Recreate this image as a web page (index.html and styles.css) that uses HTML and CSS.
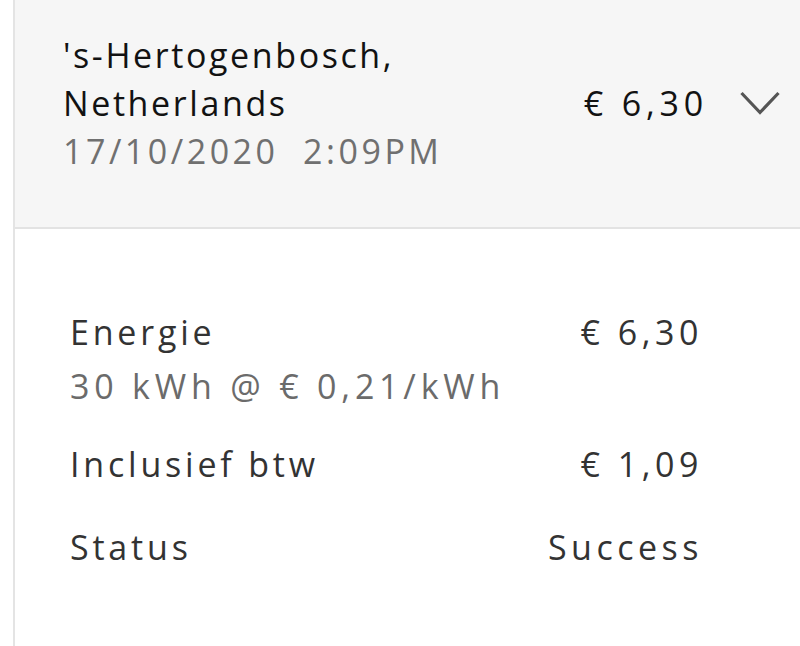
FILE: index.html
```html
<!DOCTYPE html>
<html lang="nl">
<head>
<meta charset="utf-8">
<title>Transactie</title>
<link rel="stylesheet" href="styles.css">
</head>
<body>
<div class="card">
  <div class="header">
    <div class="place">
      <div class="city">'s-Hertogenbosch,</div>
      <div class="city">Netherlands</div>
      <div class="date">17/10/2020&nbsp; 2:09PM</div>
    </div>
    <div class="summary">
      <span class="total">€ 6,30</span>
      <svg class="chevron" width="40" height="24" viewBox="0 0 40 24">
        <polyline points="1.5,2 20,21.5 38.5,2" fill="none" stroke="#555" stroke-width="3.2"/>
      </svg>
    </div>
  </div>
  <div class="details">
    <div class="row row-energy">
      <div class="label-group">
        <div class="label">Energie</div>
        <div class="sub">30 kWh @ € 0,21/kWh</div>
      </div>
      <div class="value">€ 6,30</div>
    </div>
    <div class="row row-vat">
      <div class="label">Inclusief btw</div>
      <div class="value">€ 1,09</div>
    </div>
    <div class="row row-status">
      <div class="label">Status</div>
      <div class="value">Success</div>
    </div>
  </div>
</div>
</body>
</html>
```

FILE: styles.css
```css
html, body {
  margin: 0;
  padding: 0;
  background: #ffffff;
}

body {
  font-family: "Open Sans", "Liberation Sans", sans-serif;
  font-size: 34px;
  line-height: 48px;
  letter-spacing: 2px;
  height: 646px;
  overflow: hidden;
}

.card {
  margin-left: 13px;
  border-left: 2px solid #e4e4e4;
  min-height: 646px;
}

.header {
  display: flex;
  justify-content: space-between;
  align-items: flex-start;
  background: #f6f6f6;
  border-bottom: 2px solid #e3e3e3;
  padding: 31px 20px 52px 48px;
}

.city {
  color: #121212;
  letter-spacing: 2.6px;
}

.date {
  color: #707070;
  letter-spacing: 3.5px;
}

.summary {
  display: flex;
  align-items: center;
  gap: 32px;
  margin-top: 48px;
  height: 48px;
}

.total {
  color: #121212;
  letter-spacing: 4.8px;
}

.chevron {
  display: block;
}

.details {
  padding: 79px 97px 0 55px;
}

.row {
  display: flex;
  justify-content: space-between;
  align-items: flex-start;
  color: #333333;
}

.label {
  letter-spacing: 3.8px;
}

.value {
  letter-spacing: 4.5px;
}

.sub {
  color: #6b6b6b;
  margin-top: 6px;
  letter-spacing: 4.8px;
}

.row-vat {
  margin-top: 30px;
}

.row-status {
  margin-top: 35px;
}
```
